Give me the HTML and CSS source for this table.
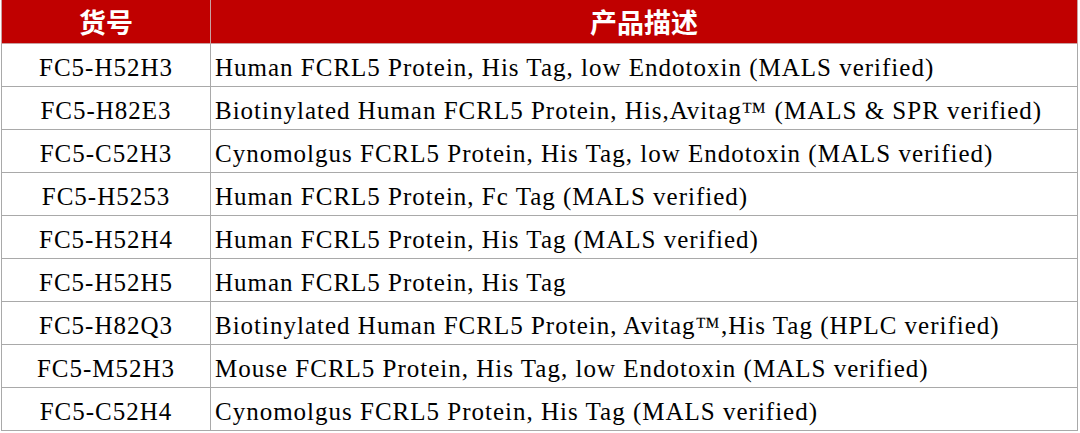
FILE: index.html
```html
<!DOCTYPE html>
<html lang="zh">
<head>
<meta charset="utf-8">
<link rel="stylesheet" href="styles.css">
</head>
<body>
<table class="products">
  <thead>
    <tr><th class="col-code">货号</th><th class="col-desc">产品描述</th></tr>
  </thead>
  <tbody>
    <tr><td class="code">FC5-H52H3</td><td class="desc">Human FCRL5 Protein, His Tag, low Endotoxin (MALS verified)</td></tr>
    <tr><td class="code">FC5-H82E3</td><td class="desc">Biotinylated Human FCRL5 Protein, His,Avitag™ (MALS &amp; SPR verified)</td></tr>
    <tr><td class="code">FC5-C52H3</td><td class="desc">Cynomolgus FCRL5 Protein, His Tag, low Endotoxin (MALS verified)</td></tr>
    <tr><td class="code">FC5-H5253</td><td class="desc">Human FCRL5 Protein, Fc Tag (MALS verified)</td></tr>
    <tr><td class="code">FC5-H52H4</td><td class="desc">Human FCRL5 Protein, His Tag (MALS verified)</td></tr>
    <tr><td class="code">FC5-H52H5</td><td class="desc">Human FCRL5 Protein, His Tag</td></tr>
    <tr><td class="code">FC5-H82Q3</td><td class="desc">Biotinylated Human FCRL5 Protein, Avitag™,His Tag (HPLC verified)</td></tr>
    <tr><td class="code">FC5-M52H3</td><td class="desc">Mouse FCRL5 Protein, His Tag, low Endotoxin (MALS verified)</td></tr>
    <tr><td class="code">FC5-C52H4</td><td class="desc">Cynomolgus FCRL5 Protein, His Tag (MALS verified)</td></tr>
  </tbody>
</table>
</body>
</html>
```

FILE: styles.css
```css
html, body {
  margin: 0;
  padding: 0;
  background: #ffffff;
  font-family: "Liberation Serif", "Times New Roman", serif;
}

.products {
  margin: 0 0 0 1px;
  width: 1077px;
  border-collapse: collapse;
  table-layout: fixed;
  color: #000000;
}

.col-code {
  width: 208px;
}

.products th {
  background: #c00000;
  color: #ffffff;
  font-family: "Noto Sans CJK SC", "Noto Sans", sans-serif;
  font-weight: 700;
  font-size: 27px;
  height: 42px;
  padding: 0;
  line-height: 43px;
  border: 1px solid #c9a0a0;
  border-top: none;
  text-align: center;
}

.products td {
  height: 36px;
  padding: 6px 0 0 0;
  border: 1px solid #a9a9a9;
  font-family: "Liberation Serif", "Times New Roman", serif;
  font-size: 25px;
  letter-spacing: 1px;
  line-height: 36px;
  white-space: nowrap;
}

.products td.code {
  text-align: center;
}

.products td.desc {
  text-align: left;
  padding-left: 4px;
}
```
